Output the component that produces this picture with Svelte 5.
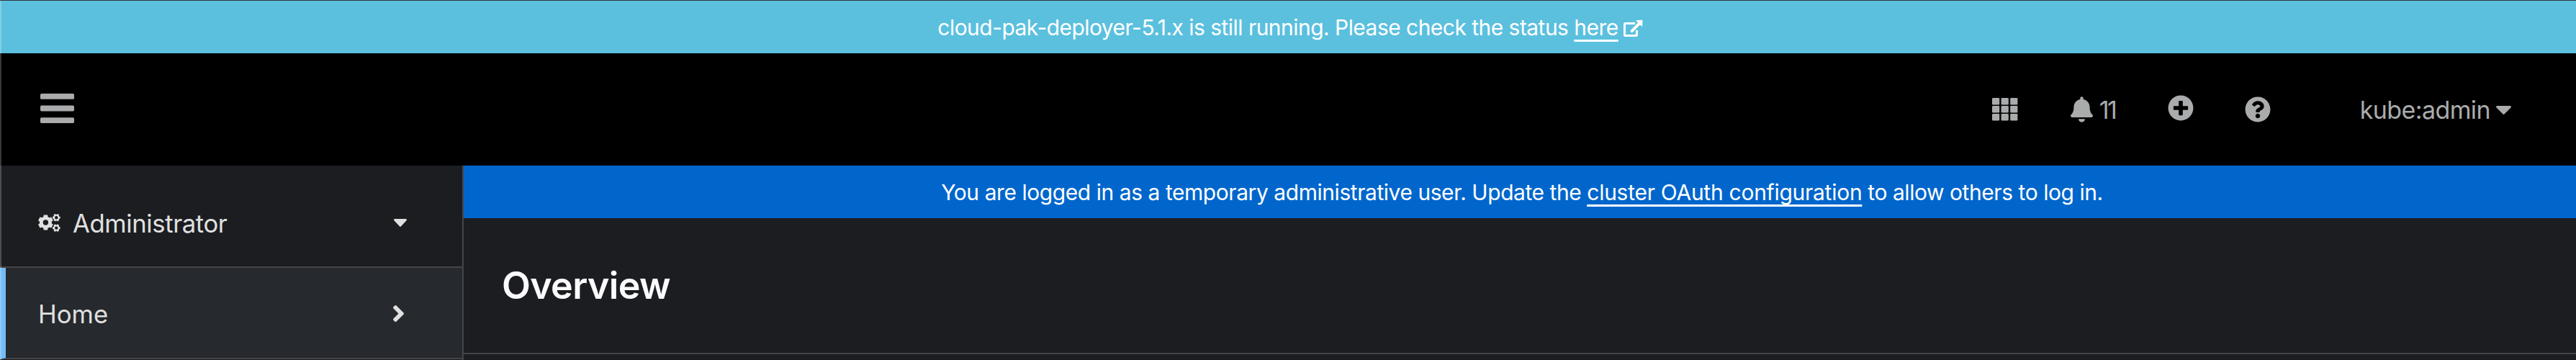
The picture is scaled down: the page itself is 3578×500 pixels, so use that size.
<script>
  // Six-toothed gear outline with a round hole.
  function gear(cx, cy, outer, inner, hole, turn) {
    const at = (r, deg) => {
      const a = (deg * Math.PI) / 180;
      return `${(cx + r * Math.cos(a)).toFixed(2)} ${(cy + r * Math.sin(a)).toFixed(2)}`;
    };
    const points = [];
    for (let i = 0; i < 6; i++) {
      const a = turn + i * 60;
      points.push(at(inner, a - 20), at(outer, a - 15), at(outer, a + 15), at(inner, a + 20));
    }
    return `M${points.join('L')}Z M${cx - hole} ${cy}a${hole} ${hole} 0 1 0 ${hole * 2} 0a${hole} ${hole} 0 1 0 ${-hole * 2} 0Z`;
  }

  const cogs = [
    gear(10.4, 12, 10.8, 8.6, 3.7, 30),
    gear(25.3, 5.2, 5.5, 4.3, 2.2, 0),
    gear(25.3, 19.6, 5.5, 4.3, 2.2, 0)
  ];
  const caret = 'M31.3 192h257.3c17.8 0 26.7 21.5 14.1 34.1L174.1 354.8c-7.8 7.8-20.5 7.8-28.3 0L17.2 226.1C4.6 213.5 13.5 192 31.3 192z';
</script>

<div class="page">
  <div class="banner notice">
    <span>cloud-pak-deployer-5.1.x is still running. Please check the status <a href="#status">here</a></span>
    <svg class="external" viewBox="0 0 28 25" fill="none" stroke="currentColor">
      <path stroke-width="3" d="M17 5.5H3.5a1 1 0 0 0-1 1v15a1 1 0 0 0 1 1H18.5a1 1 0 0 0 1-1V15" />
      <path stroke-width="4" stroke-linecap="round" d="M12.7 16.2L23 5.5" />
      <path fill="currentColor" stroke-width="1" stroke-linejoin="round" d="M19 1.8L27 1.2L26.6 9.4Z" />
    </svg>
  </div>

  <header class="masthead">
    <svg class="bars" viewBox="0 0 448 400" fill="currentColor" preserveAspectRatio="none">
      <rect y="0" width="448" height="76" rx="16" />
      <rect y="162" width="448" height="76" rx="16" />
      <rect y="324" width="448" height="76" rx="16" />
    </svg>
    <div class="tools">
      <svg class="apps" viewBox="0 0 36 32" fill="currentColor">
        {#each [0, 11, 22] as y}
          {#each [0, 12.6, 25.2] as x}
            <rect {x} {y} width="10.2" height="9.6" rx="1.3" />
          {/each}
        {/each}
      </svg>
      <svg class="bell" viewBox="0 0 448 512" fill="currentColor"><path d="M224 512c35.32 0 63.97-28.65 63.97-64H160.03c0 35.35 28.65 64 63.97 64zm215.39-149.71c-19.32-20.76-55.47-51.99-55.47-154.29 0-77.7-54.48-139.9-127.94-155.16V32c0-17.67-14.32-32-31.98-32s-31.98 14.33-31.98 32v20.84C118.56 68.1 64.08 130.3 64.08 208c0 102.3-36.15 133.53-55.47 154.29-6 6.45-8.66 14.16-8.61 21.71.11 16.4 12.98 32 32.1 32h383.8c19.12 0 32-15.6 32.1-32 .05-7.55-2.61-15.27-8.61-21.71z" /></svg>
      <span class="count">11</span>
      <svg class="plus" viewBox="0 0 512 512" fill="currentColor"><path d="M256 8C119 8 8 119 8 256s111 248 248 248 248-111 248-248S393 8 256 8zm144 276c0 6.6-5.4 12-12 12h-92v92c0 6.6-5.4 12-12 12h-56c-6.6 0-12-5.4-12-12v-92h-92c-6.6 0-12-5.4-12-12v-56c0-6.6 5.4-12 12-12h92v-92c0-6.6 5.4-12 12-12h56c6.6 0 12 5.4 12 12v92h92c6.6 0 12 5.4 12 12v56z" /></svg>
      <svg class="help" viewBox="0 0 512 512" fill="currentColor"><path d="M504 256c0 136.997-111.043 248-248 248S8 392.997 8 256C8 119.083 119.043 8 256 8s248 111.083 248 248zM262.655 90c-54.497 0-89.255 22.957-116.549 63.758-3.536 5.286-2.353 12.415 2.715 16.258l34.699 26.31c5.205 3.947 12.621 3.008 16.665-2.122 17.864-22.658 30.113-35.797 57.303-35.797 20.429 0 45.698 13.148 45.698 32.958 0 14.976-12.363 22.667-32.534 33.976C247.128 238.528 216 254.941 216 296v4c0 6.627 5.373 12 12 12h56c6.627 0 12-5.373 12-12v-1.333c0-28.462 83.186-29.647 83.186-106.667 0-58.002-60.165-102-116.531-102zM256 338c-25.365 0-46 20.635-46 46 0 25.364 20.635 46 46 46s46-20.636 46-46c0-25.365-20.635-46-46-46z" /></svg>
      <span class="user">kube:admin</span>
      <svg class="user-caret" viewBox="10 192 300 169" fill="currentColor"><path d={caret} /></svg>
    </div>
  </header>

  <div class="body">
    <nav>
      <div class="perspective">
        <svg class="cogs" viewBox="0 0 32 25" fill="currentColor" fill-rule="evenodd">
          {#each cogs as d}<path {d} />{/each}
        </svg>
        <span class="label">Administrator</span>
        <svg class="menu-caret" viewBox="10 192 300 169" preserveAspectRatio="none" fill="currentColor"><path d={caret} /></svg>
      </div>
      <div class="item">
        <span class="label">Home</span>
        <svg class="angle" viewBox="24 96 208 320" fill="currentColor"><path d="M224.3 273l-136 136c-9.4 9.4-24.6 9.4-33.9 0l-22.6-22.6c-9.4-9.4-9.4-24.6 0-33.9l96.4-96.4-96.4-96.4c-9.4-9.4-9.4-24.6 0-33.9L54.3 103c9.4-9.4 24.6-9.4 33.9 0l136 136c9.5 9.4 9.5 24.6.1 34z" /></svg>
      </div>
    </nav>
    <main>
      <div class="banner login">
        <span>You are logged in as a temporary administrative user. Update the <a href="#oauth">cluster OAuth configuration</a> to allow others to log in.</span>
      </div>
      <div class="title"><h1>Overview</h1></div>
    </main>
  </div>
  <div class="edge"></div>
</div>

<style>
  .page {
    position: relative;
    display: flex;
    flex-direction: column;
    box-sizing: border-box;
    height: 500px;
    overflow: hidden;
    border-top: 1px solid #34353c;
    background: #1b1d21;
    color: #e0e0e0;
    font-family: Inter, sans-serif;
    white-space: nowrap;
  }
  svg { display: block; flex: none; }
  .banner {
    display: flex;
    justify-content: center;
    align-items: center;
    box-sizing: border-box;
    height: 73px;
    flex: none;
    color: #fff;
    font-size: 30px;
  }
  .banner a {
    color: inherit;
    text-decoration: underline;
    text-decoration-thickness: 3px;
    text-underline-offset: 6px;
  }
  .notice { padding: 1px 0 0 6px; background: #5bc0de; letter-spacing: -.537px; }
  .external { width: 28px; height: 25px; margin: 3px 0 0 6px; }
  .login { padding: 1px 0 0 6px; background: #06c; letter-spacing: -.446px; }
  .login a { letter-spacing: -.27px; }
  .masthead {
    display: flex;
    align-items: center;
    justify-content: space-between;
    height: 156px;
    flex: none;
    padding: 0 90px 0 56px;
    background: #000;
    color: #aaabac;
    font-size: 34px;
  }
  .bars { width: 47px; height: 41px; margin-bottom: 3px; }
  .tools { display: flex; align-items: center; }
  .apps { width: 36px; height: 32px; margin-right: 73px; }
  .bell { width: 31px; height: 36px; margin-right: 9px; }
  .count { width: 95px; letter-spacing: -2.5px; }
  .plus, .help { width: 36px; height: 36px; }
  .plus { margin: 0 71px 5px 0; }
  .help { margin-right: 124px; }
  .user { letter-spacing: -.6px; margin-right: 8px; }
  .user-caret { width: 21px; height: 12px; margin-top: 2px; }
  .body { display: flex; flex: 1; min-height: 0; }
  nav {
    box-sizing: border-box;
    width: 644px;
    border-right: 2px solid #444548;
    font-size: 34.7px;
  }
  .perspective, .item {
    display: flex;
    align-items: center;
    box-sizing: border-box;
    border-bottom: 2px solid #444548;
  }
  .perspective { height: 142px; padding: 19px 77px 0 53px; }
  .perspective .label { letter-spacing: -.42px; }
  .item {
    height: 127px;
    padding: 2px 81px 0 45px;
    border-left: 8px solid #73bcf7;
    background: #26292d;
  }
  .label { flex: 1; }
  .cogs { width: 32px; height: 25px; margin-right: 16px; }
  .menu-caret { width: 18px; height: 11px; }
  .angle { width: 15px; height: 23px; }
  main { flex: 1; }
  .title {
    display: flex;
    align-items: center;
    box-sizing: border-box;
    height: 189px;
    padding: 0 0 0 53px;
    border-bottom: 2px solid #444548;
  }
  h1 {
    margin: 0;
    color: #fafafe;
    font-size: 52px;
    font-weight: 600;
    letter-spacing: -.7px;
  }
  /* Thin highlight along the window's left side. */
  .edge {
    position: absolute;
    inset: 0 auto 0 0;
    width: 2px;
    background: rgba(255, 255, 255, .22);
  }
</style>
